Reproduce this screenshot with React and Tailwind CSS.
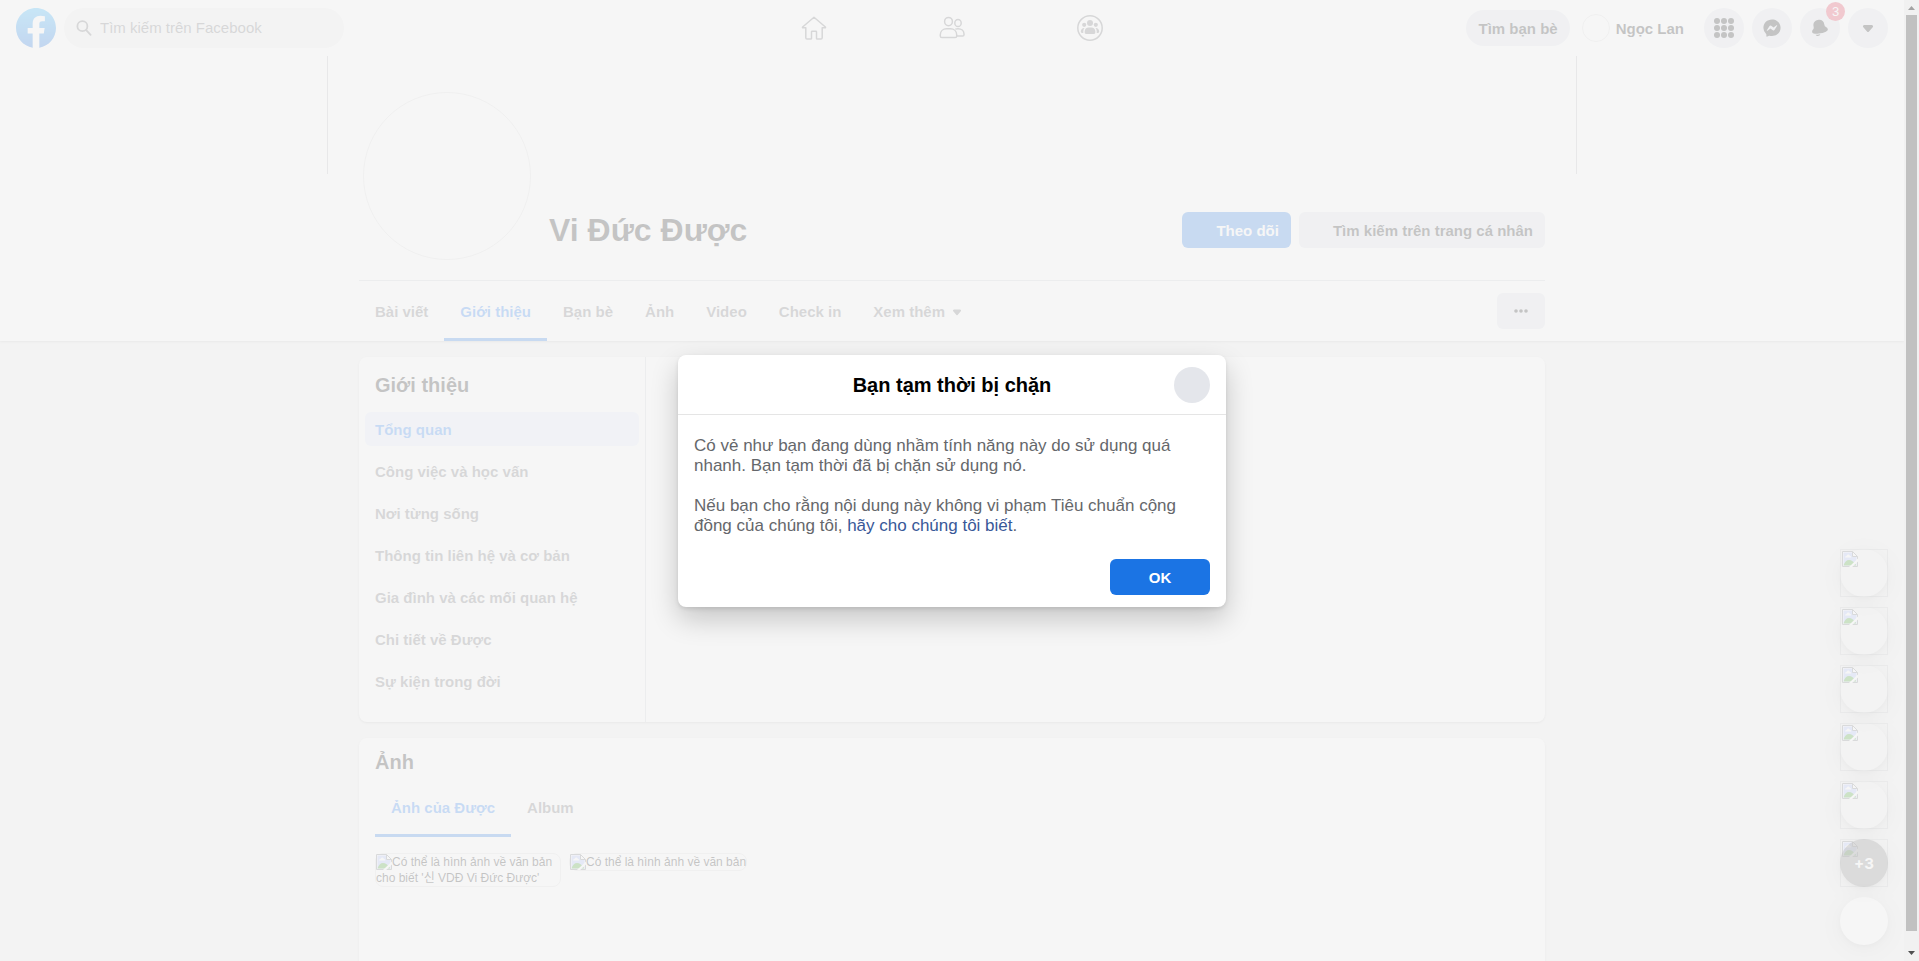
import React from "react";

const profileTabs = ["Bài viết", "Giới thiệu", "Bạn bè", "Ảnh", "Video", "Check in"];
const aboutSections = [
  "Tổng quan",
  "Công việc và học vấn",
  "Nơi từng sống",
  "Thông tin liên hệ và cơ bản",
  "Gia đình và các mối quan hệ",
  "Chi tiết về Được",
  "Sự kiện trong đời",
];

function FacebookLogo() {
  return (
    <svg viewBox="0 0 36 36" className="size-10" aria-hidden="true">
      <defs>
        <linearGradient id="logo" x1="50%" x2="50%" y1="97%" y2="0%">
          <stop offset="0%" stopColor="#0062E0" />
          <stop offset="100%" stopColor="#19AFFF" />
        </linearGradient>
      </defs>
      <path fill="url(#logo)" d="M15 35.8C6.5 34.3 0 26.9 0 18 0 8.1 8.1 0 18 0s18 8.1 18 18c0 8.9-6.5 16.3-15 17.8l-1-.8h-4l-1 .8z" />
      <path fill="#fff" d="M25 23l.8-5H21v-3.500c0-1.400.5-2.500 2.700-2.500H26V7.400c-1.300-.2-2.700-.4-4-.4-4.100 0-7 2.500-7 7v4h-4.500v5H15v12.800l1 .2h4l1-.2V23h4z" />
    </svg>
  );
}

function SearchIcon() {
  return (
    <svg viewBox="0 0 16 16" className="size-4 shrink-0" fill="none" stroke="#65676b" strokeWidth="1.8" strokeLinecap="round" aria-hidden="true">
      <circle cx="6.4" cy="6.2" r="5" />
      <path d="M10.2 10.2l4.4 4.6" />
    </svg>
  );
}

function HomeIcon() {
  return (
    <svg viewBox="0 0 28 28" className="size-7" fill="none" stroke="#65676b" strokeWidth="1.5" strokeLinejoin="round" aria-hidden="true">
      <path d="M14 3.2 2.6 13c-.3.4-.1.8.4.8h2.8v10c0 .8.5 1.3 1.2 1.3h3.8c.4 0 .7-.3.7-.7v-6.6c0-.4.3-.6.6-.6h3.8c.3 0 .6.2.6.6v6.6c0 .4.3.7.7.7h3.8c.7 0 1.2-.5 1.2-1.3v-10H25c.5 0 .7-.4.4-.8L14 3.2z" />
    </svg>
  );
}

function FriendsIcon() {
  return (
    <svg viewBox="0 0 28 28" className="size-7" fill="none" stroke="#65676b" strokeWidth="1.5" strokeLinejoin="round" aria-hidden="true">
      <ellipse cx="10.5" cy="7.6" rx="3.9" ry="4.2" />
      <ellipse cx="20" cy="9" rx="3.2" ry="3.6" />
      <path d="M8.600 14.800h3.800c3.600 0 6.300 2.400 6.300 6v1.200c0 1-.6 1.600-1.600 1.600H3.900c-1 0-1.600-.6-1.600-1.600v-1.200c0-3.600 2.700-6 6.300-6z" />
      <path d="M17.300 15.100c.8-.3 1.700-.4 2.700-.4 3.400 0 6 2 6 5.200v.8c0 .8-.5 1.300-1.300 1.300h-6" />
    </svg>
  );
}

function GroupsIcon() {
  return (
    <svg viewBox="0 0 28 28" className="size-7" fill="#65676b" aria-hidden="true">
      <circle cx="14" cy="14" r="12.2" fill="none" stroke="#65676b" strokeWidth="1.5" />
      <circle cx="14" cy="8.9" r="3" />
      <circle cx="8.2" cy="10.8" r="2.1" />
      <circle cx="19.8" cy="10.8" r="2.1" />
      <path d="M12.600 13.400h2.800c2.300 0 3.900 1.700 3.900 3.900v1.500c0 .7-.5 1.200-1.200 1.200H9.900c-.7 0-1.200-.5-1.200-1.200v-1.500c0-2.200 1.600-3.900 3.900-3.900z" />
      <path d="M8.200 14c-2 0-3.400 1.500-3.400 3.600 0 .8.400 1.400 1.200 1.400h1.300v-1.700c0-1.300.4-2.400 1.200-3.200zM19.800 14c2 0 3.400 1.500 3.400 3.600 0 .8-.4 1.400-1.200 1.400h-1.300v-1.700c0-1.300-.4-2.400-1.200-3.200z" />
    </svg>
  );
}

function GridIcon() {
  return (
    <svg viewBox="0 0 20 20" className="size-5" fill="#050505" aria-hidden="true">
      {[3, 10, 17].map((y) => [3, 10, 17].map((x) => <circle key={x + "-" + y} cx={x} cy={y} r="3" />))}
    </svg>
  );
}

function MessengerIcon() {
  return (
    <svg viewBox="0 0 28 28" className="size-5" fill="#050505" aria-hidden="true">
      <path d="M14 2.042c6.760 0 12 4.952 12 11.640S20.760 25.322 14 25.322a13.091 13.091 0 0 1-3.474-.461.956.956 0 0 0-.641.047L7.500 25.959a.961.961 0 0 1-1.348-.849l-.065-2.134a.957.957 0 0 0-.322-.684A11.389 11.389 0 0 1 2 13.682C2 6.994 7.240 2.042 14 2.042ZM6.794 17.086a.570.570 0 0 0 .827.758l3.786-2.874a.722.722 0 0 1 .868 0l2.800 2.100a1.800 1.800 0 0 0 2.600-.481l3.525-5.592a.570.570 0 0 0-.827-.758l-3.786 2.874a.722.722 0 0 1-.868 0l-2.800-2.100a1.800 1.800 0 0 0-2.600.481Z" />
    </svg>
  );
}

function BellIcon() {
  return (
    <svg viewBox="0 0 28 28" className="size-5" fill="#050505" aria-hidden="true">
      <path d="M7.847 23.488C9.207 23.488 11.443 23.363 14.467 22.806 13.944 24.228 12.581 25.247 10.980 25.247 9.649 25.247 8.483 24.542 7.825 23.488L7.847 23.488ZM24.923 15.730C25.170 17.002 24.278 18.127 22.270 19.076 21.170 19.595 18.724 20.583 14.684 21.369 11.568 21.974 9.285 22.113 7.848 22.113 7.421 22.113 7.068 22.101 6.790 22.085 4.574 21.958 3.324 21.248 3.077 19.976 2.702 18.049 3.295 17.305 4.278 16.073L4.537 15.748C5.200 14.907 5.459 14.081 5.035 11.902 4.086 7.022 6.284 3.687 11.064 2.753 15.846 1.830 19.134 4.096 20.083 8.977 20.506 11.156 21.056 11.824 21.986 12.355L22.348 12.561C23.720 13.335 24.548 13.802 24.923 15.730Z" />
    </svg>
  );
}

function CaretIcon({ className, fill }) {
  return (
    <svg viewBox="0 0 20 20" className={className} fill={fill} aria-hidden="true">
      <path d="M10 14a1 1 0 0 1-.755-.349L5.329 9.182A1.367 1.367 0 0 1 5.200 7.428 1.484 1.484 0 0 1 6.500 7h7.100a1.490 1.490 0 0 1 1.300.630 1.350 1.350 0 0 1-.173 1.556l-3.969 4.461A1 1 0 0 1 10 14z" />
    </svg>
  );
}

function BrokenImage({ className }) {
  return (
    <svg viewBox="0 0 16 16" className={className} aria-hidden="true">
      <path d="M.5.500h10l5 5v10H.5z" fill="#fff" />
      <path d="M1.500 1.500h9v4h4v9h-13z" fill="#a9bcff" />
      <path d="M3 6.500c0-1 .8-1.500 1.500-1.500.3-1 1-1.500 1.800-1.500S7.800 4.200 8 5c.8 0 1.300.6 1.300 1.500z" fill="#fff" />
      <path d="M1.500 14.500c1-3.500 3-5.500 5.500-5.500s4.500 1.500 7.500 5.500z" fill="#2f9a12" />
      <path d="M.5 15.500V.5h10l5 5v10zM10.500.5v5h5" fill="none" stroke="#707478" />
      <path d="M17 8l-9.500 9" stroke="#fff" strokeWidth="2.2" />
    </svg>
  );
}

function RoundButton({ label, children }) {
  return (
    <button type="button" aria-label={label} className="relative flex size-10 items-center justify-center rounded-full bg-[#dee2ea]">
      {children}
    </button>
  );
}

function TopBar() {
  return (
    <header className="grid h-14 shrink-0 grid-cols-[1fr_auto_1fr] items-center bg-white pr-4 pl-4">
      <div className="flex items-center gap-2">
        <a href="#home" aria-label="Facebook"><FacebookLogo /></a>
        <label className="flex h-10 w-[280px] items-center gap-2 rounded-full bg-[#eeeeee] pr-2 pl-3">
          <SearchIcon />
          <input
            type="search"
            aria-label="Tìm kiếm trên Facebook"
            placeholder="Tìm kiếm trên Facebook"
            className="w-full min-w-0 bg-transparent text-[15px] leading-5 outline-none placeholder:text-[#65676b]"
          />
        </label>
      </div>
      <nav className="flex gap-[110px]">
        <a href="#home" aria-label="Trang chủ"><HomeIcon /></a>
        <a href="#friends" aria-label="Bạn bè"><FriendsIcon /></a>
        <a href="#groups" aria-label="Nhóm"><GroupsIcon /></a>
      </nav>
      <div className="flex items-center justify-end gap-2">
        <button type="button" className="h-9 rounded-full bg-[#dee2ea] px-3 pt-0.5 text-[15px] font-bold">Tìm bạn bè</button>
        <a href="#me" className="mr-3 flex items-center gap-1.5 pl-1 text-[15px] font-bold">
          <span className="size-7 rounded-full border border-[#dedede]" />
          <span className="pt-0.5">Ngọc Lan</span>
        </a>
        <RoundButton label="Menu"><GridIcon /></RoundButton>
        <RoundButton label="Messenger"><MessengerIcon /></RoundButton>
        <RoundButton label="Thông báo">
          <BellIcon />
          <span className="absolute -top-1.5 -right-[5px] flex size-[19px] items-center justify-center rounded-full bg-[#e41e3f] text-[13px] leading-none text-white">3</span>
        </RoundButton>
        <RoundButton label="Tài khoản"><CaretIcon className="size-5" fill="#050505" /></RoundButton>
      </div>
    </header>
  );
}

function ProfileHeader() {
  return (
    <section className="shrink-0 bg-white shadow-[0_1px_2px_rgba(0,0,0,0.2)]">
      <div className="mx-auto h-[118px] max-w-[1250px] border-x border-[#b8babd]" />
      <div className="mx-auto max-w-[1186px]">
        <div className="flex items-end pb-5 pl-1">
          <div className="-mt-[82px] size-[168px] rounded-full border border-[#dedede]" />
          <h1 className="mb-3 ml-[18px] text-[32px] leading-9 font-bold">Vi Đức Được</h1>
          <div className="mb-3 ml-auto flex gap-2 text-[15px] font-bold">
            <button type="button" className="h-9 rounded-md bg-[#1b74e4] pt-0.5 pr-3 pl-[34px] text-white">Theo dõi</button>
            <button type="button" className="h-9 rounded-md bg-[#dee2ea] pt-0.5 pr-3 pl-[34px]">Tìm kiếm trên trang cá nhân</button>
          </div>
        </div>
        <div className="flex items-center justify-between border-t border-[#ced0d4]">
          <nav className="flex h-15 text-[15px] font-bold text-[#65676b]">
            {profileTabs.map((tab) => (
              <a
                key={tab}
                href="#tab"
                className={
                  tab === "Giới thiệu"
                    ? "flex items-center border-y-3 border-t-transparent border-b-[#1b74e4] px-4 pt-0.5 text-[#1877f2]"
                    : "flex items-center px-4 pt-0.5"
                }
              >
                {tab}
              </a>
            ))}
            <button type="button" className="flex items-center gap-1 px-4 pt-0.5">
              Xem thêm
              <CaretIcon className="size-4" fill="#65676b" />
            </button>
          </nav>
          <button type="button" aria-label="Xem thêm tùy chọn" className="flex h-9 w-12 items-center justify-center rounded-md bg-[#dee2ea]">
            <svg viewBox="0 0 16 16" className="size-4" fill="#050505" aria-hidden="true">
              <circle cx="3" cy="8" r="1.8" />
              <circle cx="8" cy="8" r="1.8" />
              <circle cx="13" cy="8" r="1.8" />
            </svg>
          </button>
        </div>
      </div>
    </section>
  );
}

function AboutCard() {
  return (
    <section className="flex shrink-0 rounded-lg bg-white shadow-[0_1px_2px_rgba(0,0,0,0.2)]">
      <div className="w-[287px] border-r border-[#ced0d4] pt-4 pb-6">
        <h2 className="px-4 text-xl leading-6 font-bold">Giới thiệu</h2>
        <nav className="mx-1.5 mt-[15px] flex flex-col gap-2 text-[15px] leading-5 font-bold text-[#65676b]">
          {aboutSections.map((section, index) => (
            <a
              key={section}
              href="#section"
              className={index === 0 ? "rounded-md bg-[#e3ecff] px-2.5 pt-2 pb-1.5 text-[#1877f2]" : "rounded-md px-2.5 pt-2 pb-1.5"}
            >
              {section}
            </a>
          ))}
        </nav>
      </div>
    </section>
  );
}

function PhotosCard() {
  return (
    <section className="flex-1 rounded-t-lg bg-white px-4 pt-3 shadow-[0_1px_2px_rgba(0,0,0,0.2)]">
      <h2 className="text-xl leading-6 font-bold">Ảnh</h2>
      <nav className="mt-[3px] flex h-15 text-[15px] font-bold text-[#65676b]">
        <a href="#photos" className="flex items-center border-y-3 border-t-transparent border-b-[#1b74e4] px-4 pt-0.5 text-[#1877f2]">Ảnh của Được</a>
        <a href="#albums" className="flex items-center px-4 pt-0.5">Album</a>
      </nav>
      <div className="mt-4 flex items-start gap-2 text-xs leading-4">
        <a href="#photo-1" className="w-[186px] rounded-lg border border-[#dedede]">
          <BrokenImage className="inline size-4 align-top" />
          Có thể là hình ảnh về văn bản cho biết '신 VDĐ Vi Đức Được'
        </a>
        <a href="#photo-2" className="rounded-lg border border-[#dedede] whitespace-nowrap">
          <BrokenImage className="inline size-4 align-top" />
          Có thể là hình ảnh về văn bản
        </a>
      </div>
    </section>
  );
}

function ChatHeads() {
  return (
    <aside className="absolute right-4 bottom-4 flex flex-col gap-2.5">
      {[1, 2, 3, 4, 5, 6].map((id) => (
        <button
          key={id}
          type="button"
          aria-label={"Cuộc trò chuyện " + id}
          className="relative size-12 border border-[#c4c6c8]"
        >
          <span className="absolute -inset-px rounded-full shadow-[0_2px_4px_rgba(0,0,0,0.1),0_4px_20px_rgba(0,0,0,0.16)]" />
          <BrokenImage className="absolute top-px left-px size-4" />
          {id === 6 && (
            <span className="absolute -inset-px flex items-center justify-center rounded-full bg-black/50 pt-0.5 font-[Inter,sans-serif] text-[15px] font-bold text-white">+3</span>
          )}
        </button>
      ))}
      <button type="button" aria-label="Tin nhắn mới" className="size-12 rounded-full bg-white shadow-[0_2px_4px_rgba(0,0,0,0.1),0_4px_20px_rgba(0,0,0,0.16)]" />
    </aside>
  );
}

function BlockedDialog() {
  return (
    <div className="absolute inset-0 flex items-center justify-center bg-[rgba(244,244,244,0.8)] pt-px">
      <div
        role="dialog"
        aria-modal="true"
        aria-labelledby="dialog-title"
        className="w-[548px] rounded-lg bg-white shadow-[0_12px_28px_rgba(0,0,0,0.2),0_2px_4px_rgba(0,0,0,0.1)]"
      >
        <div className="grid h-15 grid-cols-[36px_1fr_36px] items-center border-b border-[#e5e5e5] px-4">
          <h2 id="dialog-title" className="col-start-2 text-center text-xl leading-6 font-bold text-black">Bạn tạm thời bị chặn</h2>
          <button type="button" aria-label="Đóng" className="size-9 rounded-full bg-[#e4e6eb]" />
        </div>
        <div className="flex flex-col gap-5 px-4 pt-[21px] text-[17px] leading-5 text-[#65676b]">
          <p>Có vẻ như bạn đang dùng nhầm tính năng này do sử dụng quá nhanh. Bạn tạm thời đã bị chặn sử dụng nó.</p>
          <p>
            Nếu bạn cho rằng nội dung này không vi phạm Tiêu chuẩn cộng đồng của chúng tôi,{" "}
            <a href="#report" className="text-[#385898]">hãy cho chúng tôi biết</a>.
          </p>
        </div>
        <div className="flex justify-end px-4 pt-[23px] pb-3">
          <button type="button" className="h-9 w-[100px] rounded-md bg-[#1b74e4] pt-0.5 text-[15px] font-bold text-white">OK</button>
        </div>
      </div>
    </div>
  );
}

function Scrollbar() {
  return (
    <div className="flex w-[15px] shrink-0 flex-col items-center bg-[#f1f1f1]" aria-hidden="true">
      <svg viewBox="0 0 15 15" className="size-[15px] shrink-0" fill="#a3a3a3"><path d="M4 10l3.500-4 3.500 4z" /></svg>
      <div className="w-[11px] flex-1 bg-[#c1c1c1]" />
      <svg viewBox="0 0 15 30" className="h-[30px] w-[15px] shrink-0" fill="#505050"><path d="M4 20l3.500 4 3.500-4z" /></svg>
    </div>
  );
}

export default function App() {
  return (
    <div className="flex h-screen overflow-hidden font-['Liberation_Sans','Noto_Sans_CJK_KR',sans-serif] text-[#050505]">
      <div className="relative flex min-w-0 flex-1 flex-col overflow-hidden bg-[#eeeeee]">
        <TopBar />
        <ProfileHeader />
        <main className="mx-auto flex w-full max-w-[1186px] flex-1 flex-col gap-4 pt-4">
          <AboutCard />
          <PhotosCard />
        </main>
        <ChatHeads />
        <BlockedDialog />
      </div>
      <Scrollbar />
    </div>
  );
}
